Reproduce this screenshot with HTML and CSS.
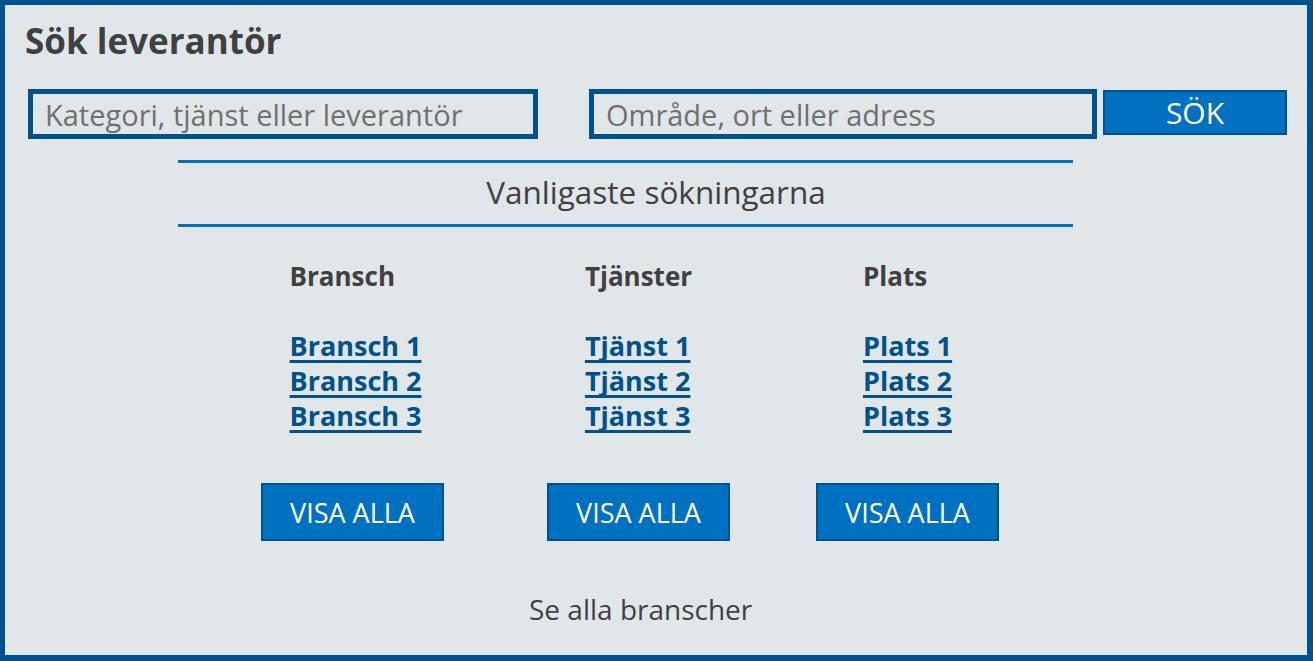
FILE: index.html
```html
<!DOCTYPE html>
<html lang="sv">
<head>
<meta charset="utf-8">
<title>Sök leverantör</title>
<link rel="stylesheet" href="styles.css">
</head>
<body>
<main class="frame">
  <h1 class="title">Sök leverantör</h1>

  <form class="search" onsubmit="return false">
    <input class="field field-what" type="text" placeholder="Kategori, tjänst eller leverantör">
    <input class="field field-where" type="text" placeholder="Område, ort eller adress">
    <button class="search-btn" type="submit">SÖK</button>
  </form>

  <hr class="rule">
  <h2 class="popular-title">Vanligaste sökningarna</h2>
  <hr class="rule">

  <section class="columns">
    <div class="col">
      <div class="list">
        <h3 class="col-title">Bransch</h3>
        <a href="#" class="link">Bransch 1</a>
        <a href="#" class="link">Bransch 2</a>
        <a href="#" class="link">Bransch 3</a>
      </div>
      <button class="show-all" type="button">VISA ALLA</button>
    </div>
    <div class="col col-mid">
      <div class="list">
        <h3 class="col-title">Tjänster</h3>
        <a href="#" class="link">Tjänst 1</a>
        <a href="#" class="link">Tjänst 2</a>
        <a href="#" class="link">Tjänst 3</a>
      </div>
      <button class="show-all" type="button">VISA ALLA</button>
    </div>
    <div class="col col-last">
      <div class="list">
        <h3 class="col-title">Plats</h3>
        <a href="#" class="link">Plats 1</a>
        <a href="#" class="link">Plats 2</a>
        <a href="#" class="link">Plats 3</a>
      </div>
      <button class="show-all" type="button">VISA ALLA</button>
    </div>
  </section>

  <p class="all-link">Se alla branscher</p>
</main>
</body>
</html>
```
FILE: styles.css
```css
html, body {
  margin: 0;
  padding: 0;
}

body {
  font-family: "Open Sans", "Noto Sans", sans-serif;
  color: #404040;
  background: #e1e6e9;
}

.frame {
  box-sizing: border-box;
  width: 1313px;
  height: 661px;
  border-style: solid;
  border-color: #00528c;
  border-width: 5px 6px 6px 5px;
  background: #e1e6e9;
  padding-top: 16px;
  overflow: hidden;
}

/* Heading */
.title {
  margin: 0 0 0 20px;
  font-size: 35px;
  line-height: 40px;
  font-weight: 700;
  color: #404040;
}

/* Search row */
.search {
  display: flex;
  align-items: flex-start;
  margin: 28px 0 0 23px;
}

.field {
  box-sizing: border-box;
  height: 50px;
  border: 5px solid #00528c;
  background: transparent;
  padding: 0 0 0 12px;
  font-family: inherit;
  font-size: 29px;
  color: #404040;
  outline: none;
}

.field::placeholder {
  color: #707070;
  opacity: 1;
}

.field-what {
  width: 510px;
}

.field-where {
  width: 508px;
  margin-left: 51px;
}

.search-btn {
  box-sizing: border-box;
  width: 184px;
  height: 45px;
  margin: 1px 0 0 6px;
  padding: 0;
  border: 2px solid #00528c;
  background: #0070c0;
  color: #fff;
  font-family: inherit;
  font-size: 30px;
  line-height: 1;
}

/* Popular searches */
.rule {
  box-sizing: border-box;
  width: 895px;
  height: 3px;
  margin: 0 0 0 173px;
  border: 0;
  background: #0070c0;
}

.search + .rule {
  margin-top: 21px;
}

.popular-title {
  margin: 0;
  height: 61px;
  box-sizing: border-box;
  text-align: center;
  font-size: 31.5px;
  line-height: 57px;
  font-weight: 400;
  color: #404040;
}

.columns {
  display: flex;
  align-items: flex-start;
  margin: 34px 0 0 256px;
}

.col {
  display: flex;
  flex-direction: column;
  align-items: center;
  width: 183px;
}

.col-mid {
  margin-left: 103px;
}

.col-last {
  margin-left: 86px;
}

.list {
  display: flex;
  flex-direction: column;
  align-items: flex-start;
  padding-left: 6px;
}

.col-mid .list {
  padding-left: 0;
}

.col-last .list {
  padding-left: 0;
}

.col-title {
  margin: 0 0 37px;
  font-size: 26px;
  line-height: 30px;
  font-weight: 700;
  color: #404040;
}

.link {
  font-size: 27px;
  line-height: 35px;
  font-weight: 700;
  color: #00528c;
  text-decoration: underline;
  text-decoration-thickness: 3px;
  text-decoration-skip-ink: none;
  text-underline-offset: 4px;
  white-space: nowrap;
}

.show-all {
  box-sizing: border-box;
  width: 183px;
  height: 58px;
  margin-top: 50px;
  padding: 0;
  border: 2px solid #00528c;
  background: #0070c0;
  color: #fff;
  font-family: inherit;
  font-size: 27px;
  line-height: 1;
}

.all-link {
  margin: 50px 0 0 524px;
  font-size: 28px;
  line-height: 36px;
  color: #404040;
}
```
